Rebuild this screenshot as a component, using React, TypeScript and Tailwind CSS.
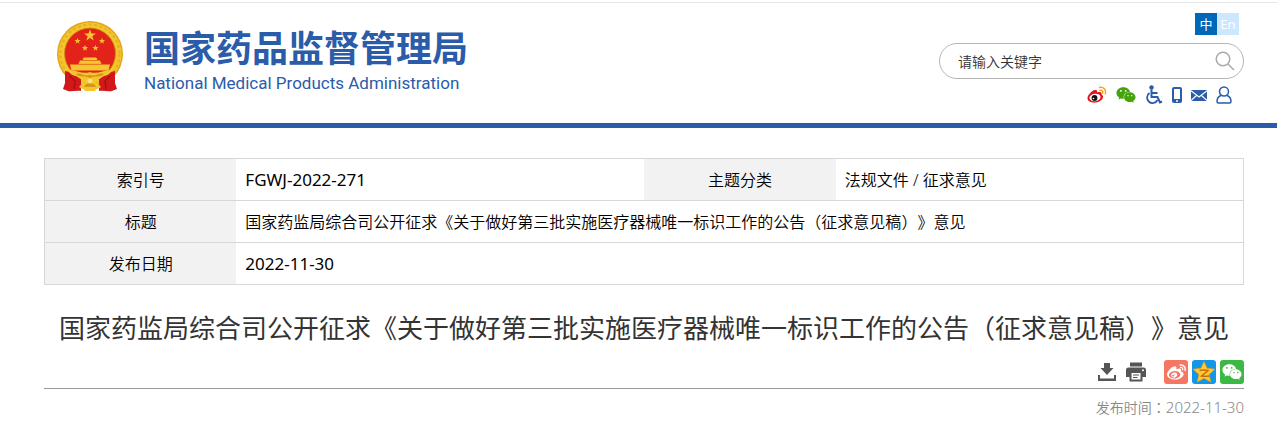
import { FaWeibo, FaWeixin } from "react-icons/fa";

const STAR = "M0 -10 2.4 -3.2 9.5 -3.1 3.8 1.2 5.9 8.1 0 4 -5.9 8.1 -3.8 1.2 -9.5 -3.1 -2.4 -3.2Z";

const Emblem = () => (
  <svg viewBox="0 -1 68 74" className="h-[74px] w-[68px] shrink-0" aria-hidden="true">
    <circle cx="34" cy="33" r="33" fill="#e2a51c" />
    <circle cx="34" cy="33" r="31.500" fill="#f2c62c" />
    <circle cx="34" cy="33" r="29.500" fill="none" stroke="#e6b024" strokeWidth="2" strokeDasharray="3 2.500" />
    <circle cx="34" cy="32.500" r="25.500" fill="#e3231a" stroke="#d18c12" strokeWidth=".8" />
    <g fill="#f6c62f">
      <path d={STAR} transform="translate(34 14.500) scale(.62)" />
      <path d={STAR} transform="translate(21.500 20) scale(.33)" />
      <path d={STAR} transform="translate(46 20) scale(.33)" />
      <path d={STAR} transform="translate(29 27) scale(.33)" />
      <path d={STAR} transform="translate(39.500 27) scale(.33)" />
      <path d="M26.500 38 28 36.500h12l1.500 1.500-1 1h-13zM24 39.500h20l1.500 3.500h-23zM14 43.500h40l-1.500 6h-37z" />
    </g>
    <path d="M23 43.200h22" stroke="#de8b18" strokeWidth=".7" />
    <path d="M9 50c6 1 11 4 16 6v14c-4-1-9 1-13 0l-5-2 2-6zM59 50c-6 1-11 4-16 6v14c4-1 9 1 13 0l5-2-2-6z" fill="#d3181a" />
    <path d="M14 55l5 5-1 8M54 55l-5 5 1 8" fill="none" stroke="#a80f14" strokeWidth="1.400" />
    <path d="M12 49c8-1 14 5 22 2 8 3 14-3 22-2-2 6-8 5-11 8-4 4-18 4-22 0-3-3-9-2-11-8z" fill="#f2c62c" />
    <path d="M20 53c5-2 8 3 14 1 6 2 9-3 14-1-4 4-8 1-14 4-6-3-10 0-14-4z" fill="#d8951a" />
    <path d="M23 66c2-3 6-4 8-7h6c2 3 6 4 8 7-2 2-5 1-6 4H29c-1-3-4-2-6-4z" fill="#f2c62c" />
    <path d="M28 66c1-3 3-4 6-4s5 1 6 4z" fill="#d8951a" />
    <circle cx="34" cy="60" r="2.500" fill="#fae37a" />
  </svg>
);

const WeiboColor = () => (
  <svg viewBox="0 0 20 18" className="h-[18px] w-5" aria-hidden="true">
    <path d="M8 4C10 3.500 10.500 5 10 6.500 13 5.500 15 6 14.500 8.500 17 9.500 16.500 13 13 15 8.500 17.800 1 17 .5 12.500.3 9 5 4.500 8 4Z" fill="#e6101c" />
    <ellipse cx="8" cy="11.500" rx="5.600" ry="3.700" fill="#fff" transform="rotate(-8 8 11.500)" />
    <circle cx="7.500" cy="12" r="2.900" fill="#111" />
    <circle cx="6.500" cy="12.500" r=".8" fill="#fff" />
    <path d="M12.500 1.500c4-1 7 2.500 5.800 6.200M13 4.300c2-.5 3.300 1 2.700 2.900" fill="none" stroke="#f5a623" strokeWidth="1.500" strokeLinecap="round" />
  </svg>
);

const Wheelchair = () => (
  <svg viewBox="0 0 18 20" className="h-5 w-[18px]" fill="none" stroke="#2a5caa" aria-hidden="true">
    <circle cx="6.500" cy="2.500" r="2.200" fill="#2a5caa" stroke="none" />
    <path d="M6.500 4.500V12h6l2.500 5.500 2-1M7 8h5.500" strokeWidth="2" />
    <path d="M4.500 8A5.500 5.500 0 1 0 12.500 15" strokeWidth="1.800" />
  </svg>
);

const Phone = () => (
  <svg viewBox="0 0 10 16" className="h-4 w-[10px]" aria-hidden="true">
    <rect width="10" height="16" rx="2" fill="#2a5caa" />
    <path d="M2 2h6v10H2z" fill="#fff" />
    <circle cx="5" cy="14" r="1" fill="#fff" />
  </svg>
);

const Mail = () => (
  <svg viewBox="0 0 16 11" className="h-[11px] w-4" aria-hidden="true">
    <path d="M0 0h16v11H0z" fill="#2a5caa" />
    <path d="M0 .8 8 7l8-6.200M0 10.500l5.500-5M16 10.500l-5.500-5" fill="none" stroke="#fff" strokeWidth="1.200" />
  </svg>
);

const Person = () => (
  <svg viewBox="0 0 16 18" className="h-[18px] w-4" fill="none" stroke="#2a5caa" strokeWidth="1.500" aria-hidden="true">
    <circle cx="8" cy="5.500" r="4.500" />
    <path d="M5 9.500C2.500 10.500 1 13 1 15.500q0 1.500 1.500 1.500h11q1.500 0 1.500-1.500c0-2.500-1.500-5-4-6" />
  </svg>
);

const Download = () => (
  <svg viewBox="0 0 18 18" className="h-[18px] w-[18px]" fill="#555" aria-hidden="true">
    <path d="M6 0h6v5h3.500L9 12 2.500 5H6zM0 12h2v3.500h14V12h2v6H0z" />
  </svg>
);

const Print = () => (
  <svg viewBox="0 0 20 20" className="h-5 w-5" aria-hidden="true">
    <path d="M4 .5h12v4H4zM2.500 5.500h15Q20 5.500 20 8v7h-3.500v4.500h-13V15H0V8Q0 5.500 2.500 5.500z" fill="#555" />
    <path d="M5.500 11h9v6.500h-9z" fill="#fff" />
    <path d="M7 13h6M7 15.500h4.500" stroke="#555" strokeWidth="1.200" />
    <circle cx="17" cy="8.300" r="1" fill="#fff" />
  </svg>
);

const QZone = () => (
  <svg viewBox="0 0 24 24" className="h-6 w-6" aria-hidden="true">
    <path d="M12 1.500 15 8.300 22.800 9.200 17 14.500 18.800 22 12 18.200 5.200 22 7 14.500 1.200 9.200 9 8.300Z" fill="#ffce2e" stroke="#e99a16" strokeWidth=".8" strokeLinejoin="round" />
    <path d="M7.500 10.500c3-.8 6-.8 8.500 0L9.500 16c3 .6 5.500.4 8 0" fill="none" stroke="#c96a0c" strokeWidth="1.500" />
  </svg>
);

const tools = [
  { name: "微博", icon: <WeiboColor /> },
  { name: "微信", icon: <FaWeixin size={20} color="#45a30c" /> },
  { name: "无障碍", icon: <Wheelchair /> },
  { name: "手机版", icon: <Phone /> },
  { name: "邮箱", icon: <Mail /> },
  { name: "个人中心", icon: <Person /> },
];

// centred full-width punctuation
const Mark = ({ children }: { children: string }) => (
  <span className="font-['Noto_Sans_CJK_TC',sans-serif]">{children}</span>
);

const DocTitle = () => (
  <>
    国家药监局综合司公开征求《关于做好第三批实施医疗器械唯一标识工作的公告<Mark>（</Mark>征求意见稿<Mark>）</Mark>》意见
  </>
);

const Header = () => (
  <header className="mt-[2px] border-t border-[#e6e6e6] border-b-[5px] border-b-[#2a5caa]">
    <div className="flex h-[120px] justify-between pl-[56px] pr-[33px]">
      <a href="#" className="flex items-start gap-5 pt-[17px] text-[#2a5caa]">
        <Emblem />
        <span className="flex flex-col">
          <span className="font-['Noto_Sans_CJK_SC',sans-serif] text-[36px] font-bold leading-[52px]">
            国家药品监督管理局
          </span>
          <span className="font-[Roboto,sans-serif] text-[17px] leading-[22px]">
            National Medical Products Administration
          </span>
        </span>
      </a>

      <div className="flex flex-col items-end pt-[10px]">
        <div className="mr-[5px] flex text-[13px] leading-[22px] text-white">
          <button className="h-[22px] w-[22px] bg-[#0068b7]">中</button>
          <button className="h-[22px] w-[22px] bg-[#cce8ff]">En</button>
        </div>
        <form className="mt-2 flex h-9 w-[305px] items-center rounded-full border border-[#b5b5b5] pl-[18px] pr-2">
          <input
            type="text"
            aria-label="请输入关键字"
            placeholder="请输入关键字"
            className="min-w-0 flex-1 bg-transparent text-[14px] font-[350] text-[#333] outline-none placeholder:text-[#333]"
          />
          <button type="button" aria-label="搜索">
            <svg viewBox="0 0 20 20" className="h-5 w-5" fill="none" stroke="#aaa" strokeWidth="1.500">
              <circle cx="8" cy="8" r="6.800" />
              <path d="m13 13 6 6" />
            </svg>
          </button>
        </form>
        <nav className="mr-3 mt-[6px] flex h-5 items-center gap-[9px]">
          {tools.map((t) => (
            <a key={t.name} href="#" aria-label={t.name}>
              {t.icon}
            </a>
          ))}
        </nav>
      </div>
    </div>
  </header>
);

const th = "bg-[#f2f2f2] text-center font-[350]";
const td = "px-[9px] text-left";
const latin = "text-[17px] font-normal";

const InfoTable = () => (
  <table className="w-full table-fixed border-collapse border border-[#d7d7d7] text-[16px] font-[350] text-black">
    <colgroup>
      <col className="w-[16%]" />
      <col className="w-[34%]" />
      <col className="w-[16%]" />
      <col className="w-[34%]" />
    </colgroup>
    <tbody>
      <tr className="h-[42px] border-b border-[#d7d7d7]">
        <th scope="row" className={th}>索引号</th>
        <td className={`${td} ${latin}`}>FGWJ-2022-271</td>
        <th scope="row" className={th}>主题分类</th>
        <td className={td}>法规文件 / 征求意见</td>
      </tr>
      <tr className="h-[42px] border-b border-[#d7d7d7]">
        <th scope="row" className={th}>标题</th>
        <td colSpan={3} className={td}><DocTitle /></td>
      </tr>
      <tr className="h-[42px]">
        <th scope="row" className={th}>发布日期</th>
        <td colSpan={3} className={`${td} ${latin}`}>2022-11-30</td>
      </tr>
    </tbody>
  </table>
);

const share = "flex h-6 w-6 items-center justify-center rounded-[3px]";

export default function App() {
  return (
    <div className="flow-root bg-white font-['Noto_Sans','Noto_Sans_CJK_SC',sans-serif] [text-spacing-trim:space-all]">
      <Header />
      <main className="pl-11 pr-[33px] pt-[30px]">
        <InfoTable />
        <h1 className="mt-[23px] text-center text-[26px] font-normal leading-[38px] text-[#333]">
          <DocTitle />
        </h1>
        <div className="mt-[13px] flex h-[29px] items-start justify-end border-b border-[#999]">
          <button aria-label="下载" className="mr-[10px] mt-[3px]"><Download /></button>
          <button aria-label="打印" className="mr-[18px] mt-[2px]"><Print /></button>
          <div className="flex gap-1">
            <a href="#" aria-label="分享到微博" className={`${share} bg-[#f67664]`}>
              <FaWeibo size={19} color="#fff" />
            </a>
            <a href="#" aria-label="分享到QQ空间" className={`${share} bg-[#1296e8]`}>
              <QZone />
            </a>
            <a href="#" aria-label="分享到微信" className={`${share} bg-[#3cb944]`}>
              <FaWeixin size={20} color="#fff" />
            </a>
          </div>
        </div>
        <p className="mt-[7px] text-right text-[14px] font-[350] leading-[22px] text-[#888]">
          发布时间<Mark>：</Mark><span className="text-[15px]">2022-11-30</span>
        </p>
      </main>
    </div>
  );
}
